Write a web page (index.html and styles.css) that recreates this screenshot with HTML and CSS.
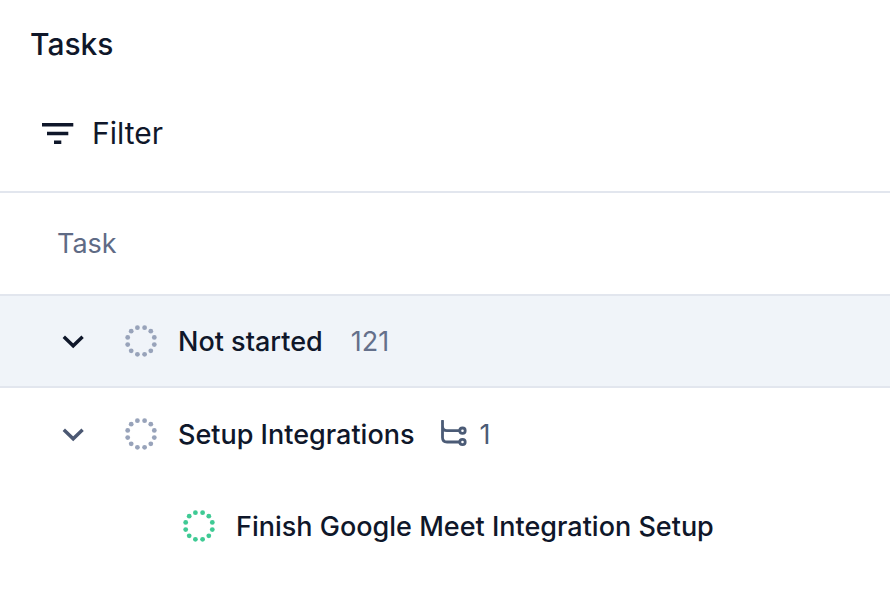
FILE: index.html
```html
<!DOCTYPE html>
<html lang="en">
<head>
<meta charset="utf-8">
<title>Tasks</title>
<link rel="stylesheet" href="styles.css">
</head>
<body>
<svg class="sprite" aria-hidden="true">
  <symbol id="chevron" viewBox="0 0 28 28">
    <path d="M4.8 9.7L14.2 18.8L23.600 9.7" fill="none" stroke="currentColor" stroke-width="3.4"/>
  </symbol>
  <symbol id="dots" viewBox="-16 -16 32 32">
    <g fill="currentColor">
      <circle cx="3.6" cy="-13.3" r="2.4"/><circle cx="9.8" cy="-9.8" r="2.4"/><circle cx="13.3" cy="-3.6" r="2.4"/>
      <circle cx="13.3" cy="3.6" r="2.4"/><circle cx="9.8" cy="9.8" r="2.4"/><circle cx="3.6" cy="13.3" r="2.4"/>
      <circle cx="-3.6" cy="13.3" r="2.4"/><circle cx="-9.8" cy="9.8" r="2.4"/><circle cx="-13.3" cy="3.6" r="2.4"/>
      <circle cx="-13.3" cy="-3.6" r="2.4"/><circle cx="-9.8" cy="-9.8" r="2.4"/><circle cx="-3.6" cy="-13.3" r="2.4"/>
    </g>
  </symbol>
</svg>
<main>
  <header class="toolbar">
    <h1 class="title">Tasks</h1>
    <button class="filter" type="button">
      <svg class="icon" viewBox="0 0 32 32" aria-hidden="true"><path d="M0 6h31.300v3.5H0zM5 14.700h21.300v3.500H5zM12 23.500h7.300V27H12z" fill="currentColor"/></svg>
      Filter
    </button>
  </header>
  <table class="tasks">
    <thead>
      <tr><th scope="col" class="column">Task</th></tr>
    </thead>
    <tbody>
      <tr class="group">
        <td>
          <div class="row">
            <button class="toggle" type="button" aria-label="Collapse Not started"><svg class="chevron" aria-hidden="true"><use href="#chevron"/></svg></button>
            <svg class="icon status" aria-hidden="true"><use href="#dots"/></svg>
            <span class="name">Not started</span>
            <span class="count">121</span>
          </div>
        </td>
      </tr>
      <tr>
        <td>
          <div class="row">
            <button class="toggle muted" type="button" aria-label="Collapse Setup Integrations"><svg class="chevron" aria-hidden="true"><use href="#chevron"/></svg></button>
            <svg class="icon status" aria-hidden="true"><use href="#dots"/></svg>
            <span class="name">Setup Integrations</span>
            <span class="subtasks">
              <svg class="branch" viewBox="0 0 28 28" aria-hidden="true"><g fill="none" stroke="currentColor" stroke-width="2.800" stroke-linecap="round"><path d="M2.500 1V17.500Q2.500 22 7 22H19.500M2.500 6Q2.500 10.700 7 10.700H19.500"/><circle cx="22.500" cy="10.700" r="2.700"/><circle cx="22.500" cy="22" r="2.700"/></g></svg>
              <span class="number">1</span>
            </span>
          </div>
        </td>
      </tr>
      <tr>
        <td>
          <div class="row child">
            <svg class="icon status active" aria-hidden="true"><use href="#dots"/></svg>
            <span class="name">Finish Google Meet Integration Setup</span>
          </div>
        </td>
      </tr>
    </tbody>
  </table>
</main>
</body>
</html>
```
FILE: styles.css
```css
* {
  box-sizing: border-box;
}

body {
  margin: 0;
  background: #fff;
  color: #0f172a;
  font-family: Inter, "Liberation Sans", sans-serif;
  font-size: 27px;
  line-height: 36px;
}

button {
  padding: 0;
  border: 0;
  background: none;
  color: inherit;
  font: inherit;
  cursor: pointer;
}

svg {
  display: block;
  flex: none;
}

.sprite {
  position: absolute;
  width: 0;
  height: 0;
}

.toolbar {
  display: flex;
  flex-direction: column;
  align-items: flex-start;
  gap: 49px;
  padding: 24px 30px 38px;
  border-bottom: 2px solid #e2e6ee;
}

.title {
  margin: 0;
  font-size: 30px;
  font-weight: 500;
  line-height: 40px;
}

.filter {
  display: flex;
  align-items: center;
  gap: 18px;
  padding-left: 12px;
  font-size: 30px;
  line-height: 40px;
}

.icon {
  width: 32px;
  height: 32px;
}

.tasks {
  width: 100%;
  border-collapse: collapse;
}

.column {
  padding: 33px 57px 32px;
  color: #5f6b85;
  font-weight: 400;
  text-align: left;
}

td {
  padding: 0;
}

.group {
  background: #f0f4f9;
  border-top: 2px solid #e2e6ee;
  border-bottom: 2px solid #e2e6ee;
}

.row {
  display: flex;
  align-items: center;
  min-height: 92px;
  padding: 0 59px;
}

.group .row {
  min-height: 90px;
}

.child {
  padding-left: 183px;
}

.toggle {
  margin-right: 38px;
}

.muted {
  color: #4b5872;
}

.chevron {
  width: 28px;
  height: 28px;
}

.status {
  margin-right: 21px;
  color: #98a3ba;
}

.active {
  color: #3fca94;
}

.name,
.count,
.number {
  padding-top: 2px;
}

.name {
  font-weight: 500;
}

.count {
  margin-left: 28px;
  color: #64708b;
}

.subtasks {
  display: flex;
  align-items: center;
  gap: 11px;
  margin-left: 26px;
  color: #4b5b76;
}

.branch {
  width: 28px;
  height: 28px;
}
```
